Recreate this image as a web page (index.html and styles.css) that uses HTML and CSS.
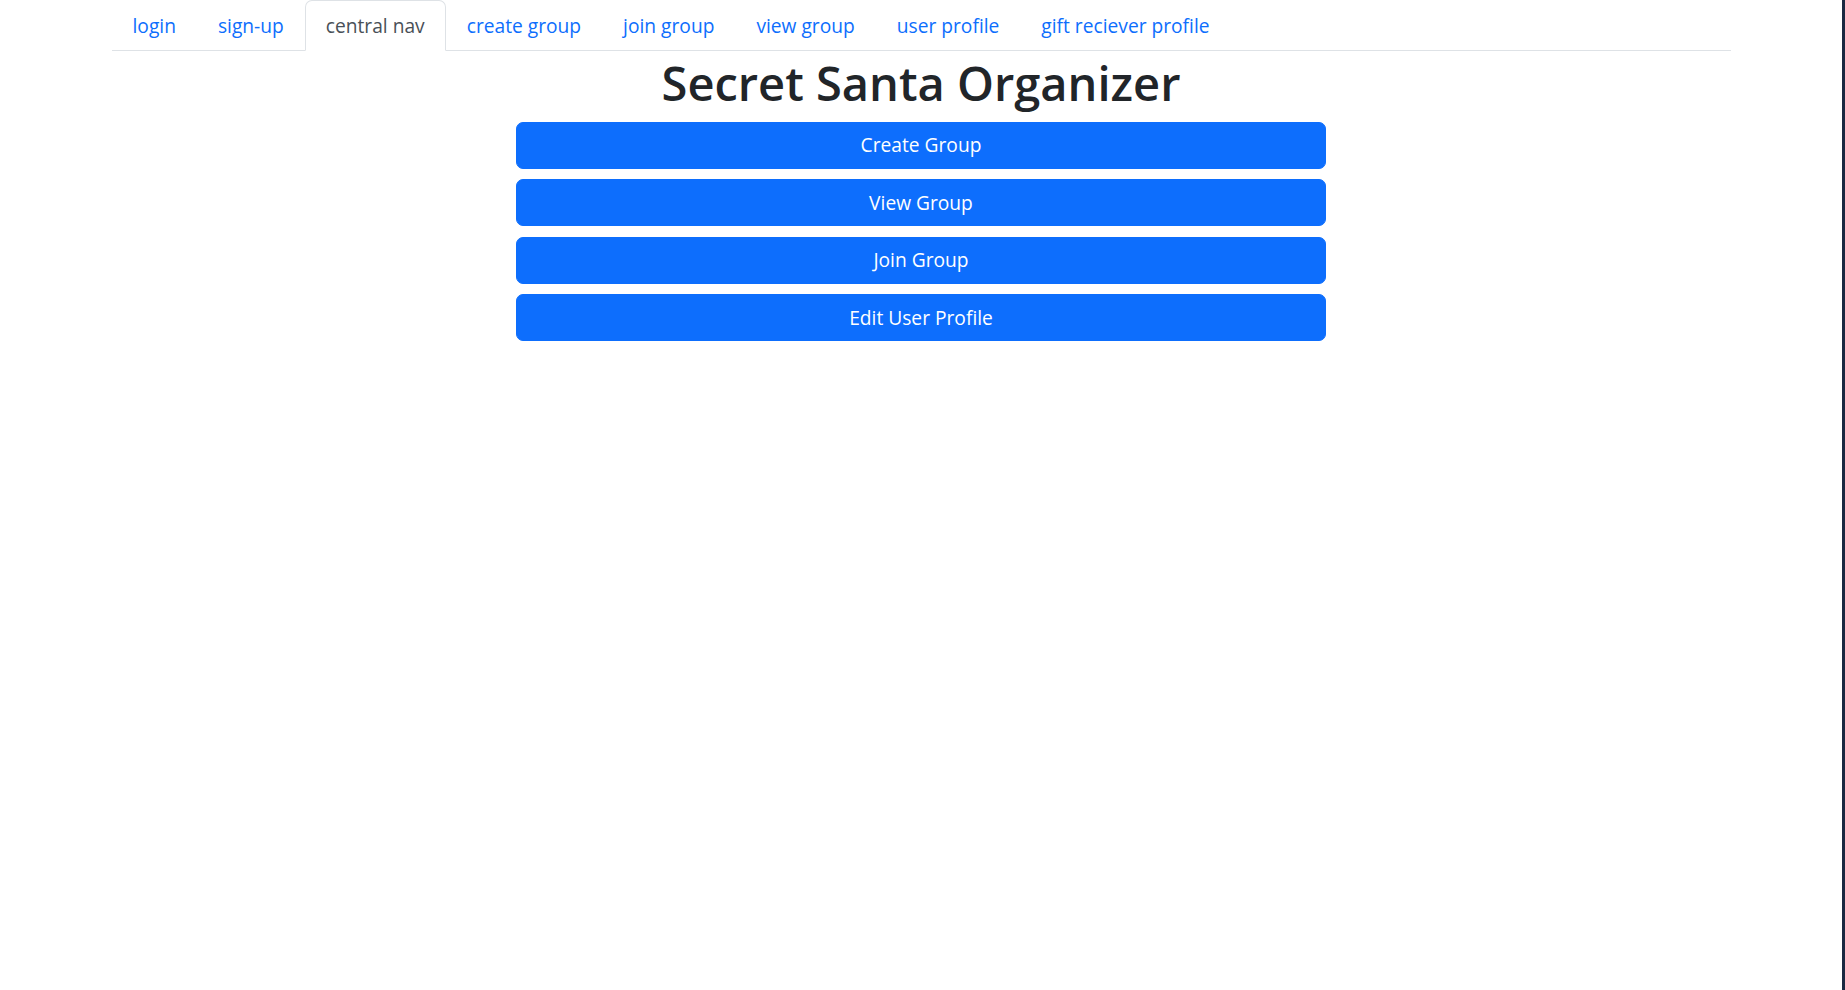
FILE: index.html
```html
<!DOCTYPE html>
<html lang="en">
<head>
<meta charset="utf-8">
<title>Secret Santa Organizer</title>
<link rel="stylesheet" href="styles.css">
</head>
<body>
<div class="page">
  <div class="container">
    <ul class="nav-tabs">
      <li><a class="nav-link" href="#">login</a></li>
      <li><a class="nav-link" href="#">sign-up</a></li>
      <li><a class="nav-link active" href="#">central nav</a></li>
      <li><a class="nav-link" href="#">create group</a></li>
      <li><a class="nav-link" href="#">join group</a></li>
      <li><a class="nav-link" href="#">view group</a></li>
      <li><a class="nav-link" href="#">user profile</a></li>
      <li><a class="nav-link" href="#">gift reciever profile</a></li>
    </ul>
    <h1 class="title">Secret Santa Organizer</h1>
    <div class="actions">
      <button class="btn">Create Group</button>
      <button class="btn">View Group</button>
      <button class="btn">Join Group</button>
      <button class="btn">Edit User Profile</button>
    </div>
  </div>
</div>
<div class="edge"></div>
</body>
</html>
```
FILE: styles.css
```css
html, body {
  margin: 0;
  padding: 0;
  height: 100%;
}
body {
  display: flex;
  background: #fff;
  font-family: "Open Sans", "Noto Sans", "Liberation Sans", sans-serif;
  color: #212529;
}
.page {
  flex: 1;
}
.edge {
  width: 3px;
  background: #1b2942;
}
.container {
  width: 1619px;
  margin: 0 auto;
}
.nav-tabs {
  display: flex;
  list-style: none;
  margin: 0;
  padding: 0;
  border-bottom: 1px solid #dee2e6;
}
.nav-link {
  display: block;
  padding: 10.5px 20px 9.7px;
  font-size: 19.2px;
  line-height: 28.8px;
  color: #0d6efd;
  text-decoration: none;
  border: 1px solid transparent;
  border-radius: 7px 7px 0 0;
  margin-bottom: -1px;
}
.nav-link.active {
  color: #495057;
  background: #fff;
  border-color: #dee2e6 #dee2e6 #fff;
}
.title {
  margin: 0;
  text-align: center;
  font-size: 47px;
  font-weight: 600;
  line-height: 58px;
  color: #212529;
  padding-top: 3px;
  padding-bottom: 10px;
}
.actions {
  width: 810px;
  margin: 0 auto;
  display: flex;
  flex-direction: column;
  gap: 10.5px;
}
.btn {
  display: block;
  width: 100%;
  height: 47px;
  border: 1px solid #0d6efd;
  background: #0d6efd;
  color: #fff;
  border-radius: 7px;
  font-family: inherit;
  font-size: 19.2px;
  line-height: 28.8px;
  text-align: center;
  padding: 0 14px;
  cursor: pointer;
}
```
